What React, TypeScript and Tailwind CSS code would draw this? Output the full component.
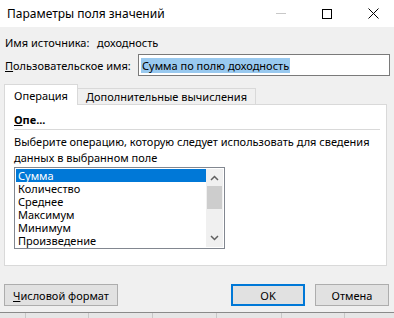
import React from 'react';

const items = ['Сумма', 'Количество', 'Среднее', 'Максимум', 'Минимум', 'Произведение'];

export default function App() {
  return (
    <div className="w-[394px] h-[318px] overflow-hidden bg-[#e6e6e6] text-[11px] text-black font-['Segoe_UI','Noto_Sans',sans-serif] leading-none whitespace-nowrap">
      <div className="h-[313px] bg-[#f0f0f0] border-b border-[#8a8a8a] flex flex-col">
        {/* title bar */}
        <div className="h-[27px] bg-white flex items-center shrink-0">
          <div className="pl-[7px] flex-1 text-[12px]">Параметры поля значений</div>
          <div className="flex items-center h-full">
            <div className="w-[46px] h-full flex items-center justify-center">
              <div className="w-[10px] h-px bg-[#c8c8c8]" />
            </div>
            <div className="w-[46px] h-full flex items-center justify-center">
              <div className="w-[10px] h-[10px] border border-black" />
            </div>
            <div className="w-[46px] h-full flex items-center justify-center mr-[-2px]">
              <svg width="11" height="11" viewBox="0 0 11 11">
                <path d="M0.5 0.5 L10.5 10.5 M10.5 0.5 L0.5 10.5" stroke="#000" strokeWidth="1" />
              </svg>
            </div>
          </div>
        </div>

        <div className="flex items-center h-[16px] mt-[7px] pl-[5px]">
          <span className="w-[92px]">Имя источника:</span>
          <span>доходность</span>
        </div>

        <div className="flex items-center mt-[4px] pl-[5px] pr-[4px]">
          <span className="w-[133px]"><span className="underline">П</span>ользовательское имя:</span>
          <div className="flex-1 h-[22px] bg-white border border-[#7a7a7a] flex items-center pl-[2px]">
            <span className="bg-[#99c9ef] px-[1px] h-[15px] flex items-center">Сумма по полю доходность</span>
          </div>
        </div>

        {/* tabs */}
        <div className="mt-[8px] pl-[4px] pr-[7px]">
          <div className="flex items-end h-[20px]">
            <div className="w-[74px] h-[21px] bg-white border border-b-0 border-[#d9d9d9] flex items-center justify-center relative z-10 -mb-px">
              Операция
            </div>
            <div className="w-[178px] h-[16px] bg-[#f0f0f0] border border-l-0 border-b-0 border-[#d9d9d9] flex items-center justify-center">
              Дополнительные вычисления
            </div>
          </div>
          <div className="h-[162px] bg-white border border-[#d9d9d9] pl-[9px] pr-[6px]">
            <div className="mt-[8px] font-bold h-[13px] flex items-center"><span className="underline">О</span>пе...</div>
            <div className="h-px bg-[#d9d9d9] mt-[3px]" />
            <div className="mt-[4px] leading-[16px]">
              <div>Выберите операцию, которую следует использовать для сведения</div>
              <div>данных в выбранном поле</div>
            </div>
            <div className="mt-[1px] w-[211px] h-[82px] border border-[#828790] flex p-px">
              <div className="flex-1 flex flex-col">
                {items.map((it, i) => (
                  <div
                    key={it}
                    className={`h-[13px] leading-[13px] shrink-0 pl-[2px] ${i === 0 ? 'bg-[#0078d7] text-white' : ''}`}
                  >
                    {it}
                  </div>
                ))}
              </div>
              <div className="w-[17px] bg-[#f0f0f0] flex flex-col items-center">
                <svg width="9" height="6" viewBox="0 0 9 6" className="mt-[6px]">
                  <path d="M1 5 L4.5 1.5 L8 5" stroke="#606060" strokeWidth="1.5" fill="none" />
                </svg>
                <div className="w-[15px] h-[23px] bg-[#cdcdcd] mt-[5px]" />
                <div className="flex-1" />
                <svg width="9" height="6" viewBox="0 0 9 6" className="mb-[6px]">
                  <path d="M1 1 L4.5 4.5 L8 1" stroke="#606060" strokeWidth="1.5" fill="none" />
                </svg>
              </div>
            </div>
          </div>
        </div>

        {/* buttons */}
        <div className="flex items-center mt-[18px] pl-[4px] pr-[5px]">
          <div className="w-[114px] h-[22px] bg-[#e1e1e1] border border-[#adadad] flex items-center justify-center">
            <span><span className="underline">Ч</span>исловой формат</span>
          </div>
          <div className="flex-1" />
          <div className="w-[74px] h-[22px] bg-[#e1e1e1] border-2 border-[#0078d7] flex items-center justify-center">OK</div>
          <div className="w-[74px] h-[22px] bg-[#e1e1e1] border border-[#adadad] flex items-center justify-center ml-[10px]">Отмена</div>
        </div>
      </div>
      <div className="h-[5px] flex">
        {[26, 63, 64, 64, 65, 63].map((w, i) => (
          <div key={i} style={{ width: w }} className="h-full border-r border-[#c8c8c8] shrink-0" />
        ))}
      </div>
    </div>
  );
}
